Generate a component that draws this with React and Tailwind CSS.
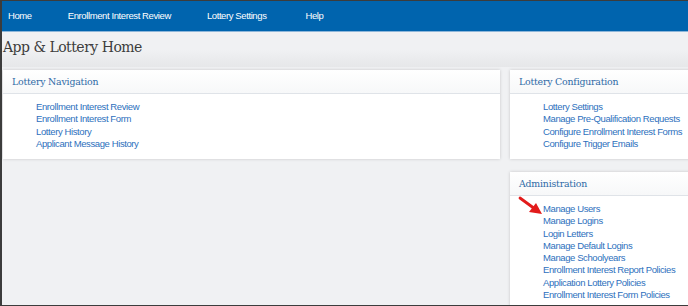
const navItems = ['Home', 'Enrollment Interest Review', 'Lottery Settings', 'Help'];

const panels = {
  navigation: ['Enrollment Interest Review', 'Enrollment Interest Form', 'Lottery History', 'Applicant Message History'],
  configuration: [
    'Lottery Settings',
    'Manage Pre-Qualification Requests',
    'Configure Enrollment Interest Forms',
    'Configure Trigger Emails',
  ],
  administration: [
    'Manage Users',
    'Manage Logins',
    'Login Letters',
    'Manage Default Logins',
    'Manage Schoolyears',
    'Enrollment Interest Report Policies',
    'Application Lottery Policies',
    'Enrollment Interest Form Policies',
  ],
};

const Panel = ({ title, links, className = '', children }) => (
  <div className={`bg-white shadow-[0_0_3px_rgba(0,0,0,0.18)] ${className}`}>
    <div className="h-[24px] flex items-center px-[9px] pt-[1px] border-b border-[#dfe3e8] bg-gradient-to-b from-white to-[#f7f8f9]">
      <h2 className="text-[9.4px] text-[#2f6aa6] font-['DejaVu_Serif',serif] tracking-[-0.2px]">{title}</h2>
    </div>
    <div className="relative pt-[7px] pb-[9px] pl-[33px]">
      {children}
      <ul className="flex flex-col">
        {links.map((l) => (
          <li key={l} className="text-[9.5px] leading-[12.3px] tracking-[-0.4px] text-[#2d70bd] whitespace-nowrap">
            {l}
          </li>
        ))}
      </ul>
    </div>
  </div>
);

export default function App() {
  return (
    <div className="w-[688px] h-[306px] overflow-hidden bg-[#f0f1f3] border-l-2 border-t border-b border-[#3c3c3c] font-['Liberation_Sans',Arial,sans-serif] flex flex-col">
      {/* Top navigation */}
      <nav className="h-[31px] bg-[#0064ae] border-b border-[#8db6d9] flex items-center pl-[6px] shrink-0">
        {navItems.map((item, i) => (
          <span
            key={item}
            className={`text-[9.5px] tracking-[-0.4px] text-white ${i === 2 ? 'mr-[39px]' : 'mr-[36px]'}`}
          >
            {item}
          </span>
        ))}
      </nav>

      <h1 className="pl-[1px] pt-[5px] h-[35px] text-[14px] text-[#3d3d3d] font-['DejaVu_Serif',serif] tracking-[-0.5px] bg-gradient-to-b from-[#f0f1f3] via-[#f0f1f3] to-[#e6e7e9]">
        App &amp; Lottery Home
      </h1>

      <div className="flex gap-[10px] pl-[1px] pt-[3px] flex-1 min-h-0">
        <div className="w-[497px] shrink-0">
          <Panel title="Lottery Navigation" links={panels.navigation} className="h-[89px]" />
        </div>
        <div className="w-[190px] shrink-0 flex flex-col gap-[13px]">
          <Panel title="Lottery Configuration" links={panels.configuration} className="h-[89px]" />
          <Panel title="Administration" links={panels.administration} className="flex-1">
            <svg className="absolute left-[8px] top-[0px]" width="26" height="21" viewBox="0 0 26 21">
              <line x1="2" y1="2" x2="17" y2="13" stroke="#e21b1b" strokeWidth="2.8" strokeLinecap="round" />
              <polygon points="24,18 11,16 18,7" fill="#e21b1b" />
            </svg>
          </Panel>
        </div>
      </div>
    </div>
  );
}
